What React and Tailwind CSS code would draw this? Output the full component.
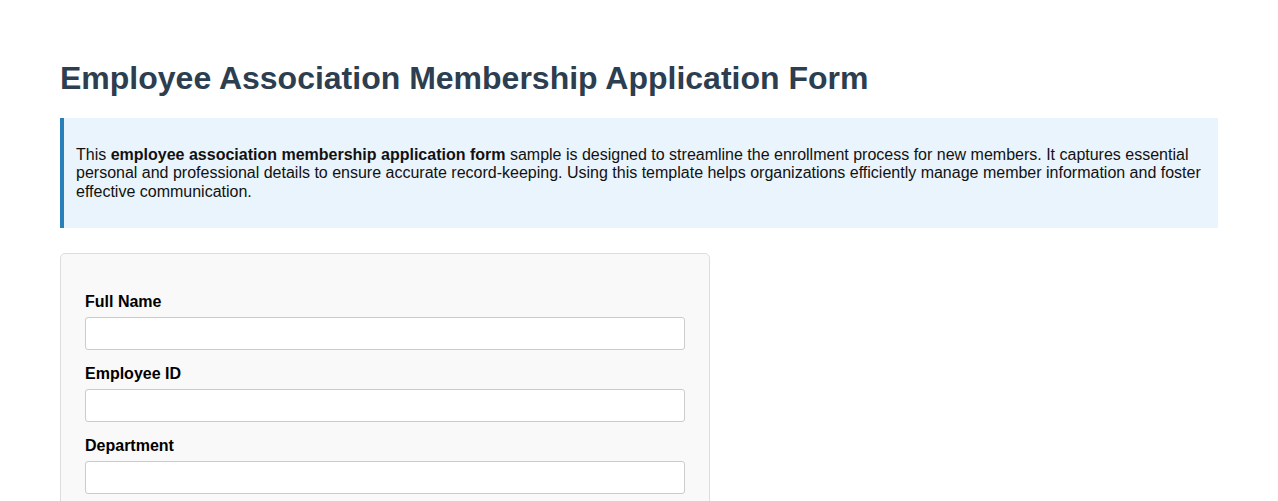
import React, { useState } from "react";

const fields = [
  { name: "full_name", label: "Full Name" },
  { name: "employee_id", label: "Employee ID" },
  { name: "department", label: "Department" },
];

export default function App() {
  const [formData, setFormData] = useState({
    full_name: "",
    employee_id: "",
    department: "",
  });

  const handleChange = (e) => {
    const { name, value } = e.target;
    setFormData((prev) => ({ ...prev, [name]: value }));
  };

  return (
    <div className="min-h-screen bg-white px-[60px] pt-[60px] pb-10 font-['Liberation_Sans',Arial,sans-serif] text-black">
      <h1 className="text-[32px] font-bold leading-[37px] text-[#2c3e50]">
        Employee Association Membership Application Form
      </h1>

      <div className="mt-[21px] border-l-4 border-[#2980b9] bg-[#eaf4fc] pl-3 pr-4 pt-[28px] pb-[27px] text-base leading-[18.4px] text-[#111]">
        <p>
          This <strong>employee association membership application form</strong> sample is
          designed to streamline the enrollment process for new members. It captures essential
          personal and professional details to ensure accurate record-keeping. Using this
          template helps organizations efficiently manage member information and foster
          effective communication.
        </p>
      </div>

      <form className="mt-[25px] w-[650px] rounded-[5px] border border-[#dddddd] bg-[#f9f9f9] px-6 pt-[39px] pb-6">
        {fields.map((f) => (
          <div key={f.name} className="mb-[15px]">
            <label
              htmlFor={f.name}
              className="mb-[6px] block text-base font-bold leading-[18px]"
            >
              {f.label}
            </label>
            <input
              id={f.name}
              type="text"
              name={f.name}
              value={formData[f.name]}
              onChange={handleChange}
              className="block h-[33px] w-full rounded-[3px] border border-[#cccccc] bg-white px-2 text-base outline-none"
            />
          </div>
        ))}
      </form>
    </div>
  );
}
